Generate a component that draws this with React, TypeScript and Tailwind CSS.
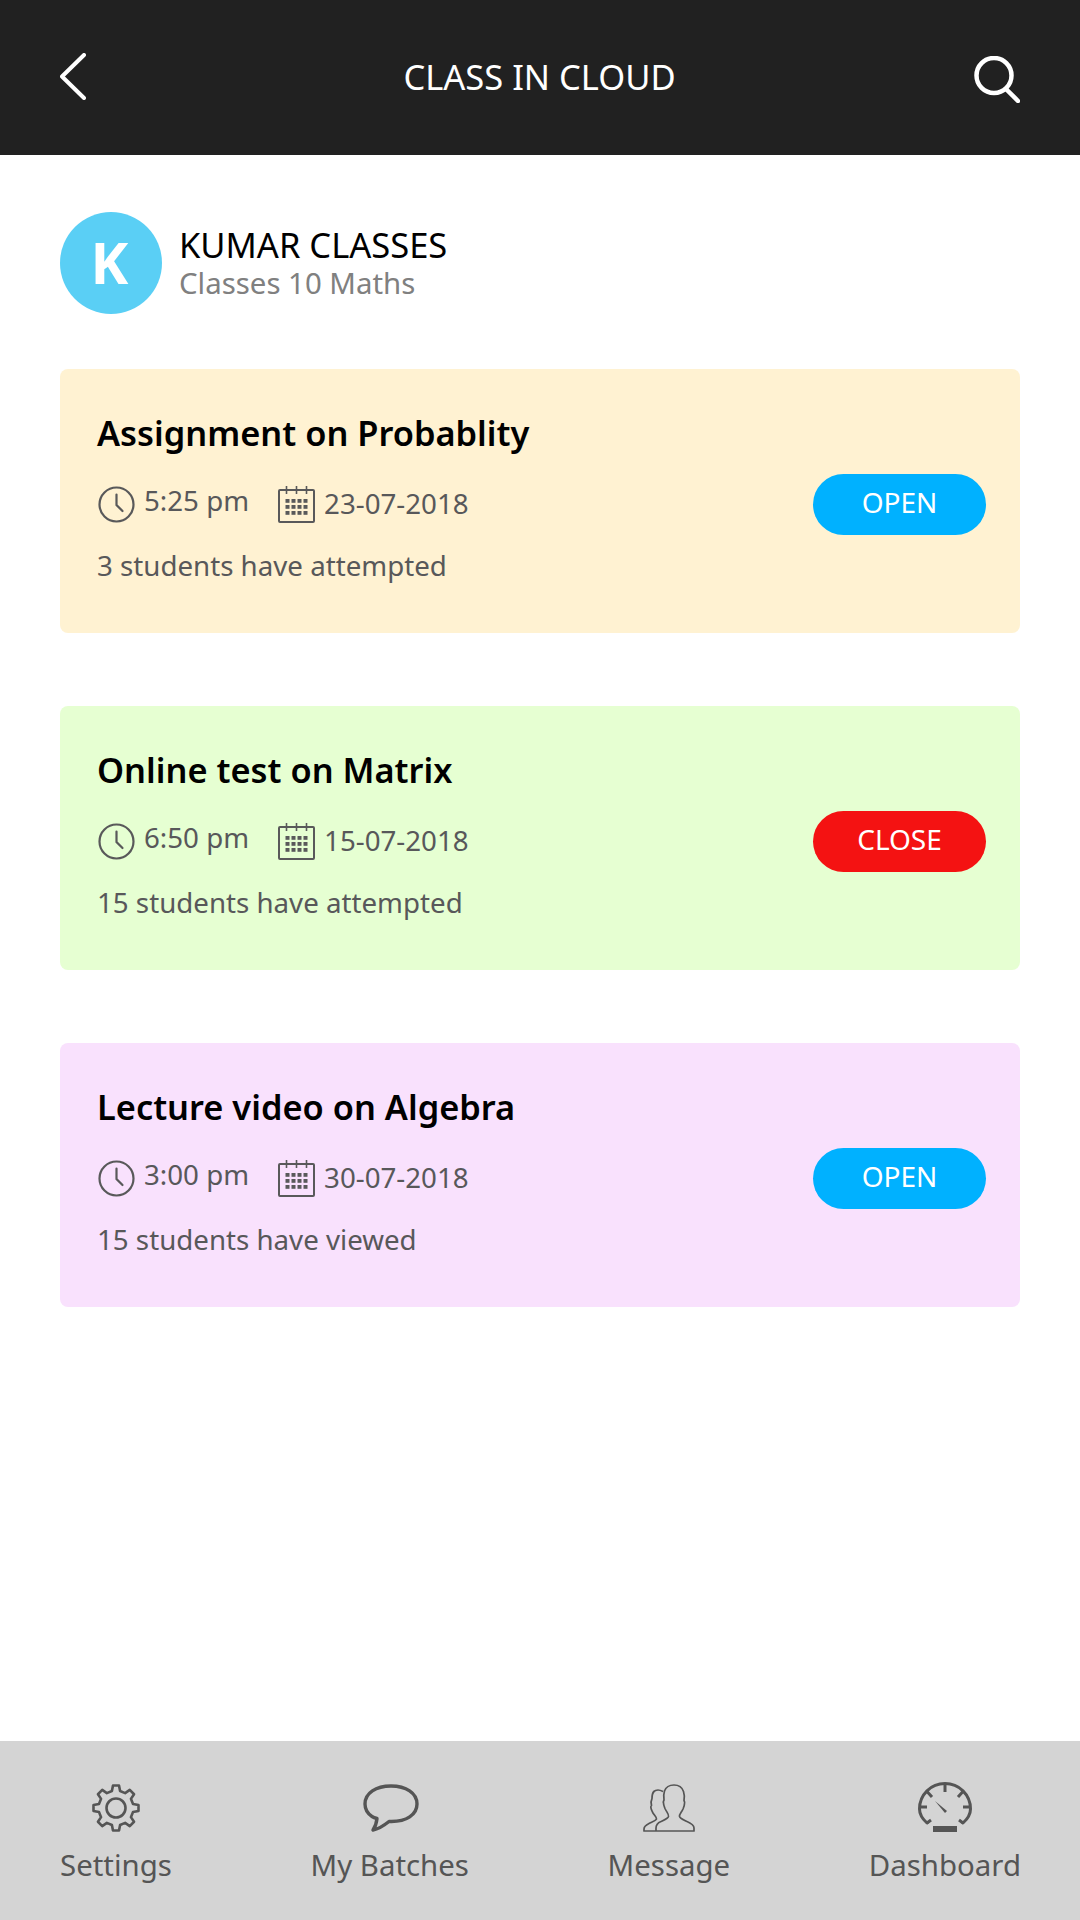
const font = { fontFamily: '"Noto Sans", sans-serif' };

type Task = {
  title: string;
  time: string;
  date: string;
  note: string;
  status: "OPEN" | "CLOSE";
  bg: string;
};

const tasks: Task[] = [
  { title: "Assignment on Probablity", time: "5:25 pm", date: "23-07-2018", note: "3 students have attempted", status: "OPEN", bg: "bg-[#fff2d2]" },
  { title: "Online test on Matrix", time: "6:50 pm", date: "15-07-2018", note: "15 students have attempted", status: "CLOSE", bg: "bg-[#e6ffd2]" },
  { title: "Lecture video on Algebra", time: "3:00 pm", date: "30-07-2018", note: "15 students have viewed", status: "OPEN", bg: "bg-[#f9e1fd]" },
];

function ClockIcon() {
  return (
    <svg width="37" height="37" viewBox="0 0 37 37" fill="none" stroke="#59595a" strokeWidth="2.2" strokeLinecap="round">
      <circle cx="18.5" cy="18.5" r="17" />
      <path d="M18.5 8.5v10.5l6 6" />
    </svg>
  );
}

function CalendarIcon() {
  const cells = [];
  for (let r = 0; r < 3; r++) {
    for (let c = 0; c < 4; c++) {
      cells.push(<rect key={`${r}-${c}`} x={7.5 + c * 6} y={13 + r * 6} width="4" height="3.8" fill="#59595a" />);
    }
  }
  return (
    <svg width="37" height="37" viewBox="0 0 37 37" fill="none">
      <rect x="1" y="4" width="35" height="32" rx="1" stroke="#59595a" strokeWidth="2" />
      <path d="M8.500 0v8M18.500 0v8M28.500 0v8" stroke="#59595a" strokeWidth="1.600" />
      {cells}
    </svg>
  );
}

function gearPath(cx: number, cy: number, outer: number, inner: number, teeth: number) {
  let d = "";
  const step = (Math.PI * 2) / teeth;
  for (let i = 0; i < teeth; i++) {
    const a = -Math.PI / 2 + i * step;
    const pts = [
      [inner, a - step * 0.3],
      [outer, a - step * 0.17],
      [outer, a + step * 0.17],
      [inner, a + step * 0.3],
    ];
    pts.forEach(([r, t], j) => {
      const x = (cx + r * Math.cos(t)).toFixed(2);
      const y = (cy + r * Math.sin(t)).toFixed(2);
      d += `${i === 0 && j === 0 ? "M" : "L"}${x} ${y} `;
    });
  }
  return d + "Z";
}

function GearIcon() {
  return (
    <svg width="48" height="48" viewBox="0 0 48 48" fill="none" stroke="#555" strokeWidth="2.6" strokeLinejoin="round">
      <path d={gearPath(24, 24, 22.7, 17.5, 8)} />
      <circle cx="24" cy="24" r="9.500" />
    </svg>
  );
}

function BubbleIcon() {
  return (
    <svg width="56" height="48" viewBox="0 0 56 48" fill="none" stroke="#555" strokeWidth="3.4" strokeLinejoin="round" className="ml-[3px]">
      <path d="M28 2C13 2 2 9 2 20c0 5 2.500 9.500 7 12.500 1.500 1 3 1.500 5 2-.5 4.500-1.500 8-4 11.500 6-1 11-4.500 16-8.500 1 0 1.500 0 2.500 0C43 37.500 54 31 54 20 54 9 43 2 28 2Z" />
    </svg>
  );
}

function UsersIcon() {
  return (
    <svg width="52" height="48" viewBox="0 0 52 48" fill="none" stroke="#555" strokeWidth="1.700" strokeLinejoin="round">
      <path d="M13 47v-3c0-3 1.500-5 5-6.500 3-1.500 7-3 7.500-5 .5-2.500-2-4.500-3.500-8-1-2.500-1.500-3.500-1.500-5.500-.5-1 0-2 .5-3-.5-3-.5-6 .5-9C23 3 27 1 31 1s8 2 9.500 6.500c1 3 1 6 .5 9 .5 1 1 2 .5 3 0 2-.5 3-1.500 5.500-1.500 3.500-4 5.500-3.500 7.500.5 2 4.500 3.500 7.500 5 3.500 1.500 7 3.500 7 6.500v3H1v-2c0-2 2-4 5-5.500 3-1.500 7-3 7.500-4.500 0-2-2-3.500-3.500-6-1-2-2-4-2-5-.5-1 0-2 .5-2.500-.5-2-.5-5 .5-7C9 7 12 6 15 6c1.500 0 3 .5 5 1.500" />
    </svg>
  );
}

function GaugeIcon() {
  return (
    <svg width="54" height="50" viewBox="0 0 54 50" fill="none" stroke="#555" strokeWidth="3" strokeLinecap="round">
      <path d="M9 41C4 36.500 1.500 31 1.500 27 1.500 12.500 13 1.500 27 1.500S52.500 12.500 52.500 27c0 4-2.500 9.500-7.500 14" />
      <path d="M27 2v8M9 9.500l5 5.500M45 9.500l-5 5.500M2 25h7M45 25h7M9 41l4-3M45 41l-4-3" strokeLinecap="butt" />
      <path d="M17 19l10 12 2-2Z" fill="#555" stroke="none" />
      <rect x="15" y="44" width="24" height="6" fill="#555" stroke="none" />
    </svg>
  );
}

const navItems = [
  { label: "Settings", icon: <GearIcon /> },
  { label: "My Batches", icon: <BubbleIcon /> },
  { label: "Message", icon: <UsersIcon /> },
  { label: "Dashboard", icon: <GaugeIcon /> },
];

function TaskCard({ task }: { task: Task }) {
  const open = task.status === "OPEN";
  return (
    <div className={`${task.bg} rounded-lg h-[264px] pl-[37px] pr-[34px] flex items-center justify-between`}>
      <div className="self-start pt-[42px]">
        <h2 className="text-[34.4px] leading-[44px] font-semibold text-black">{task.title}</h2>
        <div className="flex items-center mt-[29px] text-[#58585a] text-[27.7px] leading-[38px]">
          <span className="ml-[1px] mt-[2px] flex">
            <ClockIcon />
          </span>
          <span className="ml-[9px] -mt-[8px]">{task.time}</span>
          <span className="ml-[29px] mt-[2px] flex">
            <CalendarIcon />
          </span>
          <span className="ml-[9px] -mt-[1px]">{task.date}</span>
        </div>
        <p className="mt-[23px] text-[#58585a] text-[27.7px] leading-[38px]">{task.note}</p>
      </div>
      <button className={`${open ? "bg-[#00b1ff]" : "bg-[#f41212]"} w-[173px] h-[61px] rounded-full text-white text-[28px] mt-[7px] pb-[5px]`}>
        {task.status}
      </button>
    </div>
  );
}

export default function App() {
  return (
    <div className="w-[1080px] h-[1920px] bg-white flex flex-col" style={font}>
      <header className="h-[155px] bg-[#212121] flex items-center px-[60px] text-white">
        <div className="w-[46px] -mt-[2px] flex">
          <svg width="26" height="47" viewBox="0 0 26 47" fill="none" stroke="white" strokeWidth="4" strokeLinecap="round" strokeLinejoin="round">
            <path d="M24 2 2 23.500 24 45" />
          </svg>
        </div>
        <h1 className="flex-1 text-center text-[34.500px] leading-[46px] -mt-[2px] pr-[2px]">CLASS IN CLOUD</h1>
        <div className="w-[46px] mt-[4px] -ml-[1px] flex">
          <svg width="46" height="47" viewBox="0 0 46 47" fill="none" stroke="white" strokeWidth="4.500" strokeLinecap="round">
            <circle cx="20" cy="19.500" r="17.500" />
            <path d="M32 33l12 12" />
          </svg>
        </div>
      </header>

      <main className="flex-1 px-[60px]">
        <div className="flex items-center mt-[57px]">
          <div className="w-[102px] h-[102px] rounded-full bg-[#5acff5] flex items-center justify-center text-white text-[57px] font-bold pr-[3px]">
            K
          </div>
          <div className="ml-[17px]">
            <p className="text-[34.500px] leading-[40px] text-black">KUMAR CLASSES</p>
            <p className="text-[29.400px] leading-[36px] text-[#808080]">Classes 10 Maths</p>
          </div>
        </div>
        <div className="mt-[55px] flex flex-col gap-[73px]">
          {tasks.map((t) => (
            <TaskCard key={t.title} task={t} />
          ))}
        </div>
      </main>

      <nav className="h-[179px] bg-[#d4d4d4] flex justify-between pl-[60px] pr-[59px] pt-[39px]">
        {navItems.map((item) => (
          <div key={item.label} className="flex flex-col items-center text-[#555] text-[29.400px] leading-[40px]">
            <div className="h-[52px] flex items-end">{item.icon}</div>
            <span className="mt-[13px]">{item.label}</span>
          </div>
        ))}
      </nav>
    </div>
  );
}
